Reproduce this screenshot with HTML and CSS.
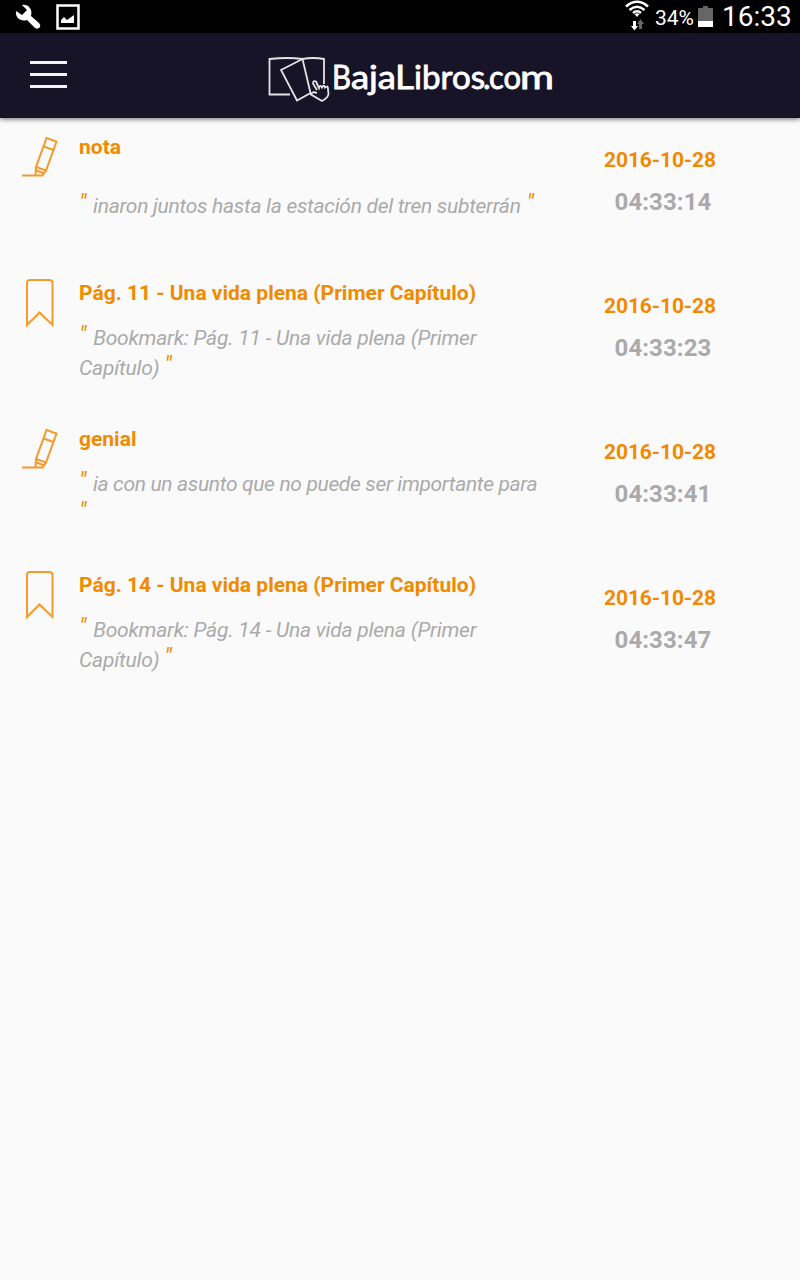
FILE: index.html
```html
<!DOCTYPE html>

<html lang="es">
<head>
	<meta charset="utf-8" />
	<title>BajaLibros.com</title>
	<link rel="stylesheet" href="styles.css">
</head>
<body>
	<svg class="symbols" width="0" height="0">
		<symbol id="marker" viewBox="0 0 38 44">
			<path d="M24.500 3 L34.500 6.500 L24 35.500 L14 32 Z M21.500 11.500 L31.500 15 M14 31.500 L13.500 40 M14.500 35.500 L22.500 38.500 M24 35.500 L20.500 40.500 H0" />
		</symbol>
		<symbol id="bookmark" viewBox="0 0 30 52">
			<path d="M2 48 V6 Q2 3 5 3 H24 Q27.500 3 27.500 6 V48 L14.500 35.500 Z" />
		</symbol>
	</svg>
	<div class="status">
		<svg class="wrench" width="26" height="26" viewBox="0 0 26 26">
			<path d="M7 1 L12 6 L7 11 L1 7 C0 14 6 18 12 16 L20 24 Q23 26 25 23 Q26 21 24 19 L16 12 C18 5 13 0 7 1 Z" />
		</svg>
		<svg class="photo" width="24" height="26" viewBox="0 0 24 26">
			<path class="frame" d="M1.500 1.500 H22.500 V24.500 H1.500 Z" />
			<path d="M5 19 V16 L8 13 L11 16 L18 11 V19 Z" />
		</svg>
		<svg class="wifi" width="24" height="31" viewBox="0 0 24 31">
			<path class="wave" d="M1 6.500 Q12 -3 23 6.500 M4.500 10 Q12 3.500 19.500 10 M8 13 Q12 9.500 16 13" />
			<path d="M9.500 14 Q12 12.500 14.500 14 L12 17 Z" />
			<path d="M8 21 H11 V26 H13 L9.500 30.500 L6 26 H8 Z" />
			<path class="dim" d="M14 29 V24 H12 L15.500 19 L19 24 H17 V29 Z" />
		</svg>
		<span class="percent">34%</span>
		<svg class="battery" width="15" height="21" viewBox="0 0 15 21">
			<path class="dim" d="M0 2 H5 V0 H10 V2 H15 V15 H0 Z" />
			<path d="M0 15 H15 V21 H0 Z" />
		</svg>
		<span class="clock">16:33</span>
	</div>
	<div class="header">
		<div class="menu">
			<span></span>
			<span></span>
			<span></span>
		</div>
		<svg class="logo" width="290" height="50" viewBox="0 0 290 50">
			<path class="line" d="M34.500 2 Q20 0 1.500 2 V37.500 H22 M34.500 2 Q45 0 56 2 V27" />
			<path class="line" d="M13 13 L34.500 2 L42.500 36 L29 43.500 Z" />
			<path class="hand" d="M49 33 L45 26.500 Q45 23 48 24.500 L51 31 Q52 27 54 30.500 Q56 27 57 30.500 Q60 28 60 32 L60.500 37 Q60 41 54 44 L43 37.500 Q44 34 49 36" />
			<text x="64" y="31.500" textLength="19" lengthAdjust="spacingAndGlyphs">B</text>
			<text x="83" y="31.500" textLength="45" lengthAdjust="spacingAndGlyphs">aja</text>
			<text x="127" y="31.500" textLength="19" lengthAdjust="spacingAndGlyphs">L</text>
			<text x="146" y="31.500" textLength="71" lengthAdjust="spacingAndGlyphs">ibros</text>
			<text x="215" y="31.500">.</text>
			<text x="221" y="31.500" textLength="32" lengthAdjust="spacingAndGlyphs">co</text>
			<text x="252" y="31.500" textLength="34" lengthAdjust="spacingAndGlyphs">m</text>
		</svg>
	</div>
	<div class="notes">
		<div class="note">
			<svg class="icon marker"><use href="#marker" /></svg>
			<div class="content">
				<h2>nota</h2>
				<p><b>"</b> inaron juntos hasta la estación del tren subterrán <b>"</b></p>
			</div>
			<div class="when">
				<div class="date">2016-10-28</div>
				<div class="time">04:33:14</div>
			</div>
		</div>
		<div class="note">
			<svg class="icon bookmark"><use href="#bookmark" /></svg>
			<div class="content page">
				<h2>Pág. 11 - Una vida plena (Primer Capítulo)</h2>
				<p><b>"</b> Bookmark: Pág. 11 - Una vida plena (Primer<br />Capítulo) <b>"</b></p>
			</div>
			<div class="when">
				<div class="date">2016-10-28</div>
				<div class="time">04:33:23</div>
			</div>
		</div>
		<div class="note">
			<svg class="icon marker"><use href="#marker" /></svg>
			<div class="content">
				<h2>genial</h2>
				<p><b>"</b> ia con un asunto que no puede ser importante para<br /><b>"</b></p>
			</div>
			<div class="when">
				<div class="date">2016-10-28</div>
				<div class="time">04:33:41</div>
			</div>
		</div>
		<div class="note">
			<svg class="icon bookmark"><use href="#bookmark" /></svg>
			<div class="content page">
				<h2>Pág. 14 - Una vida plena (Primer Capítulo)</h2>
				<p><b>"</b> Bookmark: Pág. 14 - Una vida plena (Primer<br />Capítulo) <b>"</b></p>
			</div>
			<div class="when">
				<div class="date">2016-10-28</div>
				<div class="time">04:33:47</div>
			</div>
		</div>
	</div>
</body>
</html>
```
FILE: styles.css
```css
body
{
	margin: 0;
	min-height: 1280px;
	background-color: #FAFAFA;
	font-family: Roboto, sans-serif;
}

.symbols
{
	display: block;
}

.status
{
	display: flex;
	align-items: flex-start;
	box-sizing: border-box;
	height: 33px;
	padding-left: 15px;
	background-color: #000;
	color: #FFF;
	fill: #FFF;
}

	.status .wrench, .status .photo
	{
		margin-top: 4px;
	}

	.status .photo
	{
		margin-left: 15px;
	}

	.status .frame, .status .wave
	{
		fill: none;
		stroke: #FFF;
		stroke-width: 2.5;
	}

	.status .wifi
	{
		margin-left: 545px;
	}

	.status .dim
	{
		fill: #666;
	}

	.status .percent
	{
		width: 49px;
		padding-left: 6px;
		font-size: 21px;
		line-height: 36px;
		box-sizing: border-box;
	}

	.status .battery
	{
		margin-top: 6px;
	}

	.status .clock
	{
		margin-left: 9px;
		font-size: 28px;
		line-height: 33px;
	}

.header
{
	position: relative;
	display: flex;
	align-items: flex-start;
	height: 85px;
	background-color: #181427;
	box-shadow: 0 1px 5px rgba(0, 0, 0, 0.6);
}

	.header .menu
	{
		display: flex;
		flex-direction: column;
		gap: 9px;
		width: 37px;
		margin: 28px 0 0 30px;
	}

		.header .menu span
		{
			height: 3px;
			background-color: #F4F3F5;
		}

	.header .logo
	{
		margin: 24px 0 0 201px;
	}

	.header .line, .header .hand
	{
		fill: none;
		stroke: #E4E3E6;
		stroke-width: 1.8;
	}

	.header .hand
	{
		fill: #181427;
	}

	.header text
	{
		fill: #FFF;
		stroke: #FFF;
		stroke-width: 0.8;
		font-family: Lato, sans-serif;
		font-size: 32px;
	}

.note
{
	display: flex;
	height: 146px;
}

	.note .icon
	{
		flex: none;
		fill: none;
		stroke: #F59A2C;
		stroke-width: 2;
	}

	.note .marker
	{
		width: 38px;
		height: 44px;
		margin: 17px 19px 0 22px;
	}

	.note .bookmark
	{
		width: 30px;
		height: 52px;
		margin: 13px 24px 0 25px;
	}

	.note .content
	{
		width: 480px;
	}

	.note h2
	{
		margin: 14px 0 0;
		color: #F28A00;
		font-size: 21px;
		font-weight: bold;
		line-height: 30px;
	}

	.note p
	{
		margin: 15px 0 0;
		color: #AAA;
		font-size: 21px;
		font-style: italic;
		letter-spacing: -0.34px;
		line-height: 30px;
	}

	.note .page p
	{
		letter-spacing: -0.22px;
	}

	.note:first-child p
	{
		margin-top: 29px;
	}

	.note:first-child p
	{
		letter-spacing: -0.29px;
	}

	.note p b
	{
		position: relative;
		top: -2px;
		margin-right: 2px;
		color: #F28A00;
		font-size: 24px;
		font-weight: normal;
		line-height: 20px;
	}

	.note p b:last-child
	{
		margin-left: 1px;
	}

	.note p br + b:last-child
	{
		margin-left: 0;
	}

	.note .when
	{
		width: 168px;
		font-weight: bold;
		text-align: center;
	}

	.note .date
	{
		margin: 27px 0 0 45px;
		color: #F28A00;
		font-size: 21px;
		letter-spacing: -0.1px;
		line-height: 30px;
		text-align: left;
	}

	.note .time
	{
		margin: 12px 0 0 40px;
		color: #AAA;
		font-size: 24px;
		letter-spacing: 0.1px;
		line-height: 30px;
	}
```
